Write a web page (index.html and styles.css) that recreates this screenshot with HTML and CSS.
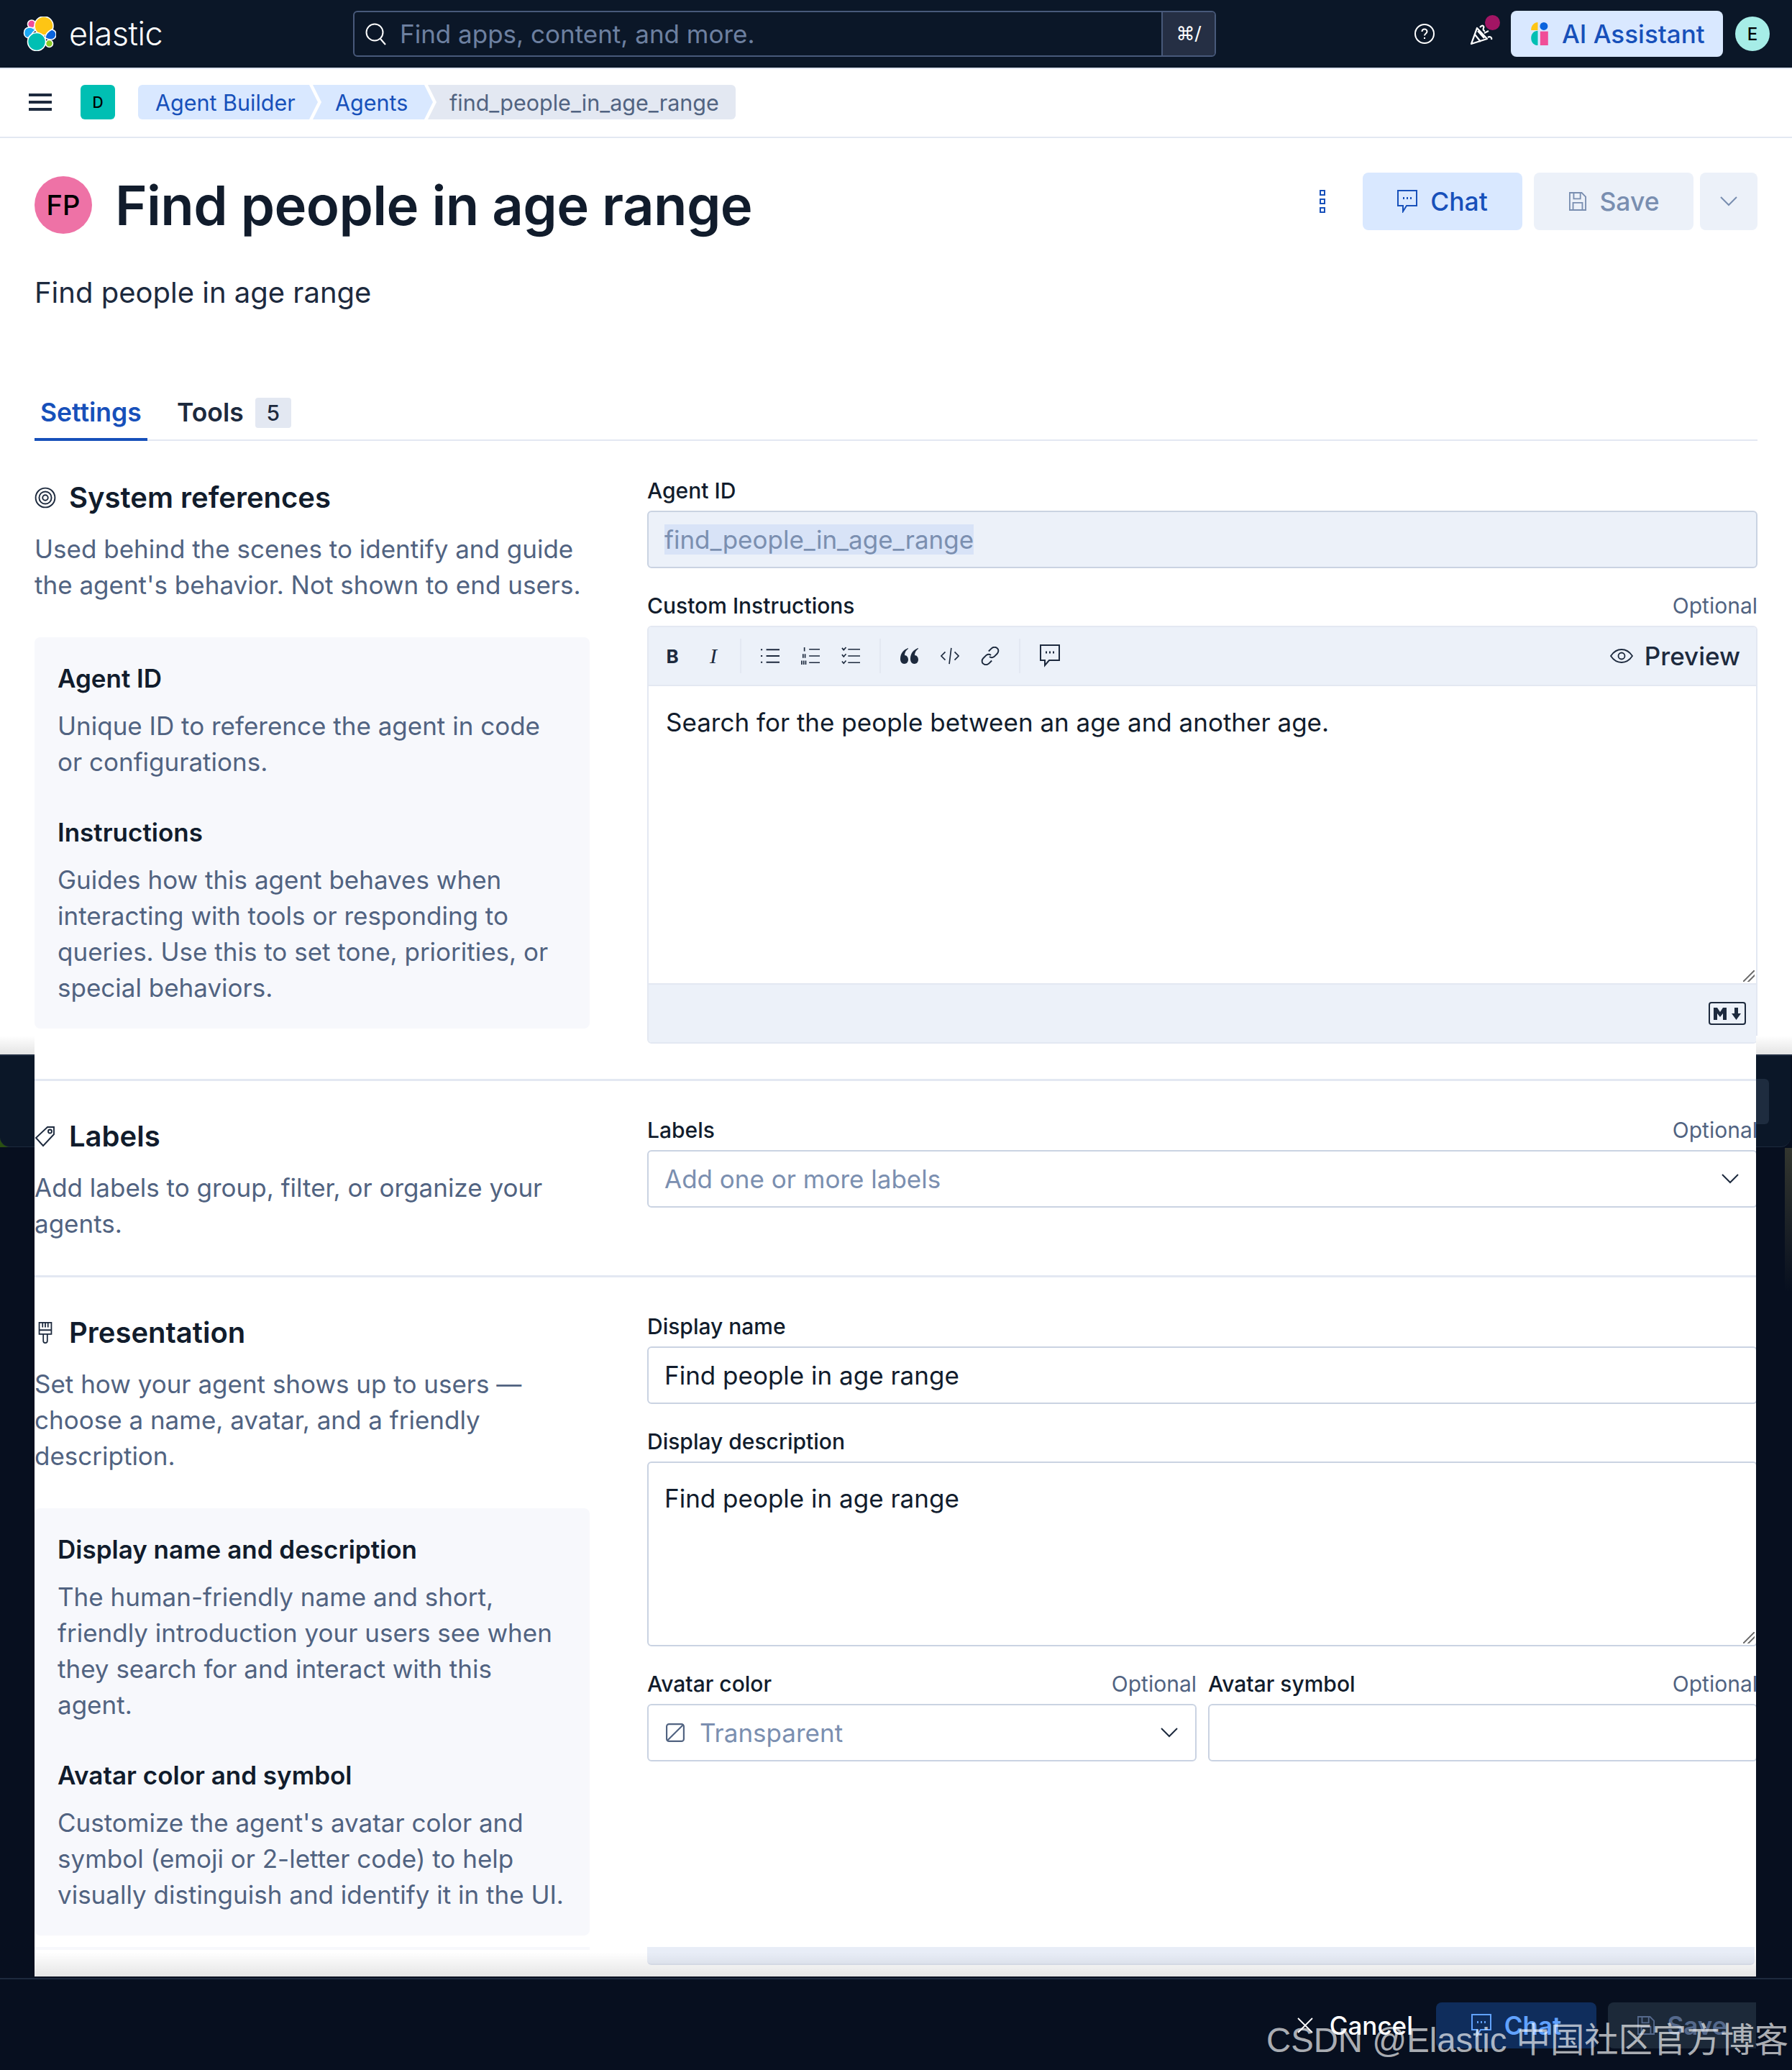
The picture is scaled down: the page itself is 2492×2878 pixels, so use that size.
FILE: index.html
```html
<!DOCTYPE html>
<html lang="en">
<head>
<meta charset="utf-8">
<title>Find people in age range</title>
<link rel="stylesheet" href="styles.css">
</head>
<body>
<div class="page">
  <header class="topbar">
    <div class="brand">
      <svg class="logo" viewBox="12 13 46 48">
        <g stroke="#fff" stroke-width="1.6">
          <circle cx="24" cy="23.5" r="5.5" fill="#f04e98"/>
          <path d="M13.5 36c0-5 3-8 8-8 3 0 6 2 8 4-3 1.500-6 5-8 11-5 0-8-3-8-7z" fill="#1ba9f5"/>
          <circle cx="41" cy="26" r="13" fill="#fec514"/>
          <path d="M43 43c0-4 3-9 9-12 4 1 6 4 6 7 0 4-3 7-7 7-3 0-6-1-8-2z" fill="#0b64dd"/>
          <circle cx="48.500" cy="50.500" r="5" fill="#8ac926"/>
          <circle cx="31" cy="48" r="12.500" fill="#00bfb3"/>
        </g>
      </svg>
      <span class="brand-name">elastic</span>
    </div>
    <div class="search">
      <svg class="icon-search" viewBox="0 0 32 32" fill="none" stroke="#fff" stroke-width="2"><circle cx="14" cy="14" r="11.500"/><path d="M22 23l7 8"/></svg>
      <span class="search-text">Find apps, content, and more.</span>
      <span class="search-key">⌘/</span>
    </div>
    <div class="top-actions">
      <svg class="icon-help" viewBox="0 0 28 28" fill="none" stroke="#fff" stroke-width="2"><circle cx="14" cy="14" r="13"/><path d="M10.500 11c0-2 1.500-3.500 3.500-3.500s3.500 1.500 3.500 3.300c0 3-3.500 3-3.500 5.700M14 19v2"/></svg>
      <span class="party">
        <svg class="icon-party" viewBox="0 0 34 32" fill="none" stroke="#fff" stroke-width="2.200" stroke-linejoin="round"><path d="M2 29L10 7l14 15zM7 16l8 10M11 11l9 10"/><path d="M14 6c4-5 6-1 5 1-1 2 0 4 2 4M20 14l6-3M25 20c3-2 6 0 5 3"/></svg>
        <span class="party-dot"></span>
      </span>
      <button class="ai-btn">
        <svg class="icon-ai" viewBox="0 0 28 38"><path d="M0 13V12C0 5.500 5 0 11 0v13z" fill="#fec514"/><circle cx="21" cy="6.500" r="6.500" fill="#0b64dd"/><path d="M11 38c-6 0-11-4.500-11-12s5-12 11-12z" fill="#00bfb3"/><rect x="15" y="15" width="13" height="23" fill="#f04e98"/></svg>
        AI Assistant
      </button>
      <span class="user-badge">E</span>
    </div>
  </header>

  <nav class="crumbbar">
    <span class="menu-lines"><i></i><i></i><i></i></span>
    <span class="space-tile">D</span>
    <ol class="crumbs">
      <li class="crumb crumb-first">Agent Builder</li>
      <li class="crumb crumb-mid">Agents</li>
      <li class="crumb crumb-last">find_people_in_age_range</li>
    </ol>
  </nav>

  <main class="upper">
    <div class="title-row">
      <span class="avatar">FP</span>
      <h1 class="title">Find people in age range</h1>
      <div class="title-actions">
        <span class="dots"><i></i><i></i><i></i></span>
        <button class="btn btn-primary">
          <svg class="btn-icon" viewBox="0 0 28 32" fill="none" stroke="currentColor" stroke-width="2"><path d="M1 1h26v21H13l-5 8v-8H1z"/><path d="M8 11.500h2M13 11.500h2M18 11.500h2" stroke-width="3"/></svg>
          Chat
        </button>
        <button class="btn btn-muted btn-save">
          <svg class="btn-icon btn-icon-save" viewBox="0 0 26 28" fill="none" stroke="currentColor" stroke-width="2"><path d="M1 1h18l6 6v20H1zM7 1v9h10V1M6 27V16h14v11"/></svg>
          Save
        </button>
        <button class="btn btn-muted btn-square">
          <svg class="chev" viewBox="0 0 24 14" fill="none" stroke="currentColor" stroke-width="2"><path d="M1 1l11 11L23 1"/></svg>
        </button>
      </div>
    </div>
    <p class="lead">Find people in age range</p>

    <div class="tabs">
      <span class="tab tab-active">Settings</span>
      <span class="tab">Tools <span class="tab-count">5</span></span>
    </div>

    <section class="split">
      <div class="side">
        <h2 class="side-title">
          <svg class="side-icon" viewBox="0 0 28 28" fill="none" stroke="#1d2a3e" stroke-width="1.800"><circle cx="14" cy="14" r="12.500"/><circle cx="14" cy="14" r="8"/><circle cx="14" cy="14" r="3.500"/></svg>
          System references
        </h2>
        <p class="side-text">Used behind the scenes to identify and guide the agent's behavior. Not shown to end users.</p>
        <div class="note">
          <h3 class="note-title">Agent ID</h3>
          <p class="note-text">Unique ID to reference the agent in code or configurations.</p>
          <h3 class="note-title note-gap">Instructions</h3>
          <p class="note-text">Guides how this agent behaves when interacting with tools or responding to queries. Use this to set tone, priorities, or special behaviors.</p>
        </div>
      </div>
      <div class="form">
        <div class="field">
          <div class="label-row"><label class="label">Agent ID</label></div>
          <div class="input input-disabled"><span class="selected">find_people_in_age_range</span></div>
        </div>
        <div class="field">
          <div class="label-row"><label class="label">Custom Instructions</label><span class="optional">Optional</span></div>
          <div class="editor">
            <div class="toolbar">
              <span class="tool tool-b">B</span>
              <span class="tool tool-i">I</span>
              <span class="tool-sep"></span>
              <svg class="tool-svg" viewBox="0 0 24 22" fill="none" stroke="#1d2a3e" stroke-width="1.800"><path d="M7 3h17M7 11h17M7 19h17M0 3h2M0 11h2M0 19h2" /></svg>
              <svg class="tool-svg" viewBox="0 0 28 28" fill="none" stroke="#1d2a3e" stroke-width="1.800"><path d="M12 4h16M12 14h16M12 24h16M5 1v6M3 11v6M6 11v6M1 21v6M4 21v6M7 21v6"/></svg>
              <svg class="tool-svg" viewBox="0 0 28 28" fill="none" stroke="#1d2a3e" stroke-width="1.800"><path d="M10 4h18M10 14h18M10 24h18M1 2l2.500 3L7 1M1 12l2.500 3L7 11M1 22l2.500 3L7 21"/></svg>
              <span class="tool-sep"></span>
              <svg class="tool-svg" viewBox="0 0 26 24"><path d="M11 1C5 3 0 8 0 16c0 4 2 7 5.500 7S11 20 11 17s-2-6-5-6c0-4 2-7 5-9zM25 1c-6 2-11 7-11 15 0 4 2 7 5.500 7s5.500-3 5.500-6-2-6-5-6c0-4 2-7 5-9z" fill="#1d2a3e"/></svg>
              <svg class="tool-svg" viewBox="0 0 28 26" fill="none" stroke="#1d2a3e" stroke-width="1.800"><path d="M7 7l-6 6 6 6M21 7l6 6-6 6M16 1l-3 24"/></svg>
              <svg class="tool-svg" viewBox="0 0 24 24" fill="none" stroke="#1d2a3e" stroke-width="1.800"><path d="M10 6l4-4c2-1.500 5-1.500 7 0s2 5 0 7l-4 4c-2 1.500-4 1.500-6 0M14 18l-4 4c-2 1.500-5 1.500-7 0s-2-5 0-7l4-4c2-1.500 4-1.500 6 0"/></svg>
              <span class="tool-sep"></span>
              <svg class="tool-svg tool-comment" viewBox="0 0 28 32" fill="none" stroke="#1d2a3e" stroke-width="2"><path d="M1 1h26v21H13l-6 7v-7H1z"/><path d="M8 11h2M13 11h2M18 11h2" stroke-width="3"/></svg>
              <span class="preview">
                <svg class="preview-eye" viewBox="0 0 32 20" fill="none" stroke="#1d2a3e" stroke-width="1.800"><path d="M1 10c4-6 9-9 15-9s11 3 15 9c-4 6-9 9-15 9S5 16 1 10z"/><circle cx="16" cy="10" r="4.500"/></svg>
                Preview
              </span>
            </div>
            <div class="editor-body">Search for the people between an age and another age.<span class="grip"></span></div>
            <div class="editor-foot">
              <svg class="md-icon" viewBox="0 0 52 32"><rect x="1" y="1" width="50" height="30" rx="3" fill="none" stroke="#1d2a3e" stroke-width="2"/><path d="M7 25V8h5l4 6 4-6h5v17h-5v-9l-4 5-4-5v9zM36 8h5v8h4l-6.500 9-6.500-9h4z" fill="#1d2a3e"/></svg>
            </div>
          </div>
        </div>
      </div>
    </section>
    <span class="fade fade-left"></span>
    <span class="fade fade-right"></span>
  </main>

  <div class="stage">
    <span class="ghost ghost-left"></span>
    <span class="ghost ghost-right"><span class="ghost-btn"></span></span>
    <span class="edge-strip"></span>
    <div class="sheet">
      <div class="sheet-inner">
        <hr class="rule">
        <section class="split split-labels">
          <div class="side">
            <h2 class="side-title">
              <svg class="side-icon" viewBox="0 0 28 30" fill="none" stroke="#1d2a3e" stroke-width="1.900"><path d="M17 2h9v10L11 28 1 17z"/><circle cx="20.500" cy="8" r="2.500"/></svg>
              Labels
            </h2>
            <p class="side-text">Add labels to group, filter, or organize your agents.</p>
          </div>
          <div class="form">
            <div class="field">
              <div class="label-row"><label class="label">Labels</label><span class="optional">Optional</span></div>
              <div class="input input-select"><span class="placeholder">Add one or more labels</span>
                <svg class="chev chev-dark" viewBox="0 0 24 14" fill="none" stroke="currentColor" stroke-width="2"><path d="M1 1l11 11L23 1"/></svg>
              </div>
            </div>
          </div>
        </section>
        <hr class="rule">
        <section class="split split-presentation">
          <div class="side">
            <h2 class="side-title">
              <svg class="side-icon" viewBox="0 0 24 32" fill="none" stroke="#1d2a3e" stroke-width="1.900"><path d="M3 1h18v17H3zM3 12h18M8 1v7M12 1v7M16 1v7M9 18v10c0 4 6 4 6 0V18"/></svg>
              Presentation
            </h2>
            <p class="side-text">Set how your agent shows up to users — choose a name, avatar, and a friendly description.</p>
            <div class="note">
              <h3 class="note-title">Display name and description</h3>
              <p class="note-text">The human-friendly name and short, friendly introduction your users see when they search for and interact with this agent.</p>
              <h3 class="note-title note-gap">Avatar color and symbol</h3>
              <p class="note-text">Customize the agent's avatar color and symbol (emoji or 2-letter code) to help visually distinguish and identify it in the UI.</p>
            </div>
            <div class="note-next"></div>
          </div>
          <div class="form">
            <div class="field">
              <div class="label-row"><label class="label">Display name</label></div>
              <div class="input">Find people in age range</div>
            </div>
            <div class="field">
              <div class="label-row"><label class="label">Display description</label></div>
              <div class="input input-area">Find people in age range<span class="grip grip-area"></span></div>
            </div>
            <div class="pair">
              <div class="field">
                <div class="label-row"><label class="label">Avatar color</label><span class="optional">Optional</span></div>
                <div class="input input-select">
                  <svg class="swatch" viewBox="0 0 24 24" fill="none" stroke="#516381" stroke-width="2"><rect x="1" y="1" width="22" height="22" rx="3"/><path d="M2 22L22 2"/></svg>
                  <span class="placeholder">Transparent</span>
                  <svg class="chev chev-dark" viewBox="0 0 24 14" fill="none" stroke="currentColor" stroke-width="2"><path d="M1 1l11 11L23 1"/></svg>
                </div>
              </div>
              <div class="field">
                <div class="label-row"><label class="label">Avatar symbol</label><span class="optional">Optional</span></div>
                <div class="input"></div>
              </div>
            </div>
            <div class="form-tail"></div>
          </div>
        </section>
        <span class="sheet-shade"></span>
      </div>
    </div>
    <footer class="dock">
      <span class="dock-cancel">
        <svg class="dock-x" viewBox="0 0 24 24" fill="none" stroke="#fff" stroke-width="1.800"><path d="M2 2l20 20M22 2L2 22"/></svg>
        Cancel
      </span>
      <span class="dock-btn dock-chat">
        <svg class="btn-icon" viewBox="0 0 28 32" fill="none" stroke="currentColor" stroke-width="2"><path d="M1 1h26v21H13l-5 8v-8H1z"/><path d="M8 11.500h2M13 11.500h2M18 11.500h2" stroke-width="3"/></svg>
        Chat
      </span>
      <span class="dock-btn dock-save">
        <svg class="btn-icon btn-icon-save" viewBox="0 0 26 28" fill="none" stroke="currentColor" stroke-width="2"><path d="M1 1h18l6 6v20H1zM7 1v9h10V1M6 27V16h14v11"/></svg>
        Save
      </span>
    </footer>
    <span class="watermark">CSDN @Elastic 中国社区官方博客</span>
  </div>
</div>
</body>
</html>
```
FILE: styles.css
```css
* { box-sizing: border-box; }
html, body { margin: 0; padding: 0; }
body {
  font-family: Inter, "Noto Sans", sans-serif;
  color: #111c2c;
  background: #fff;
}
h1, h2, h3, p, ol { margin: 0; padding: 0; }
button { font-family: inherit; border: 0; }
.page { width: 2492px; height: 2878px; overflow: hidden; display: flex; flex-direction: column; }

/* top bar */
.topbar {
  height: 96px;
  flex: none;
  background: #0b1728;
  border-bottom: 2px solid #e3e8f2;
  display: flex;
  align-items: center;
  padding: 0 31px 0 32px;
}
.brand { display: flex; align-items: center; gap: 18px; width: 459px; flex: none; }
.logo { width: 46px; height: 48px; flex: none; }
.brand-name { color: #fff; font-size: 45px; font-weight: 300; letter-spacing: -0.5px; line-height: 48px; }
.search {
  width: 1200px;
  height: 64px;
  flex: none;
  border: 2px solid #48597a;
  border-radius: 6px;
  display: flex;
  align-items: center;
  padding-left: 14px;
}
.icon-search { width: 32px; height: 34px; flex: none; }
.search-text { color: #6d80a0; font-size: 35px; margin-left: 17px; flex: 1; }
.search-key {
  width: 74px;
  height: 60px;
  background: #252f44;
  border-left: 2px solid #48597a;
  color: #fff;
  font-size: 26px;
  display: flex;
  align-items: center;
  justify-content: center;
  border-radius: 0 4px 4px 0;
  font-family: "DejaVu Sans", sans-serif;
}
.top-actions { margin-left: auto; display: flex; align-items: center; }
.icon-help { width: 28px; height: 28px; }
.party { position: relative; display: block; width: 34px; height: 32px; margin-left: 49px; margin-top: 2px; }
.icon-party { width: 34px; height: 32px; display: block; }
.party-dot { position: absolute; left: 21px; top: -11px; width: 21px; height: 21px; border-radius: 50%; background: #a21564; }
.ai-btn {
  margin-left: 23px;
  width: 295px;
  height: 64px;
  background: #d9e8ff;
  border-radius: 8px;
  color: #1750ba;
  font-size: 35px;
  font-weight: 500;
  display: flex;
  align-items: center;
  gap: 17px;
  padding: 0 0 0 26px;
}
.icon-ai { width: 28px; height: 32px; flex: none; }
.user-badge {
  margin-left: 17px;
  width: 48px;
  height: 48px;
  border-radius: 50%;
  background: #a6ede7;
  color: #000;
  font-size: 24px;
  font-weight: 500;
  display: flex;
  align-items: center;
  justify-content: center;
}

/* breadcrumb bar */
.crumbbar {
  height: 96px;
  flex: none;
  display: flex;
  align-items: center;
  padding: 0 0 2px 40px;
  border-bottom: 2px solid #e3e8f2;
  box-shadow: 0 4px 10px rgba(80, 100, 140, 0.08);
  position: relative;
}
.menu-lines { display: flex; flex-direction: column; gap: 6px; width: 32px; flex: none; }
.menu-lines i { display: block; height: 4px; background: #1d2a3e; }
.space-tile {
  margin-left: 40px;
  width: 48px;
  height: 48px;
  border-radius: 6px;
  background: #00bfb3;
  color: #000;
  font-size: 21px;
  font-weight: 500;
  display: flex;
  align-items: center;
  justify-content: center;
  flex: none;
}
.crumbs { list-style: none; display: flex; margin-left: 32px; height: 48px; }
.crumb { height: 48px; line-height: 50px; font-size: 30.500px; color: #1750ba; background: #d9e8ff; white-space: nowrap; }
.crumb-first { width: 250px; padding-left: 24px; border-radius: 6px 0 0 6px; clip-path: polygon(0 0, 238px 0, 250px 24px, 238px 48px, 0 48px); }
.crumb-mid { width: 167px; margin-left: -7px; padding-left: 31px; clip-path: polygon(0 0, 155px 0, 167px 24px, 155px 48px, 0 48px, 12px 24px); }
.crumb-last { width: 428px; margin-left: -7px; padding-left: 30px; color: #516381; background: #e3e8f2; border-radius: 0 6px 6px 0; clip-path: polygon(0 0, 100% 0, 100% 100%, 0 100%, 12px 24px); }

/* upper */
.upper { position: relative; height: 1274px; flex: none; padding: 0 48px; background: #fff; }
.title-row { display: flex; align-items: center; height: 80px; margin-top: 53px; }
.avatar {
  width: 80px;
  height: 80px;
  border-radius: 50%;
  background: #ee72a6;
  color: #000;
  font-size: 38px;
  font-weight: 500;
  display: flex;
  align-items: center;
  justify-content: center;
  flex: none;
}
.title { margin-left: 32px; font-size: 76px; font-weight: 600; line-height: 92px; letter-spacing: -0.6px; color: #111c2c; }
.title-actions { margin-left: auto; display: flex; align-items: center; margin-top: -10px; }
.dots { display: flex; flex-direction: column; gap: 4px; margin-right: 52px; }
.dots i { width: 8px; height: 8px; border: 2px solid #1750ba; display: block; }
.btn {
  height: 80px;
  width: 222px;
  border-radius: 8px;
  font-size: 35.500px;
  font-weight: 500;
  display: flex;
  align-items: center;
  justify-content: center;
  gap: 18px;
}
.btn-primary { background: #d9e8ff; color: #1750ba; }
.btn-muted { background: #ecf1f9; color: #798eb0; margin-left: 16px; }
.btn-save { padding-left: 8px; }
.btn-square { width: 80px; margin-left: 9px; }
.btn-icon { width: 28px; height: 32px; flex: none; }
.btn-icon-save { width: 24px; height: 26px; }
.chev { width: 24px; height: 14px; display: block; }
.lead { font-size: 40px; line-height: 50px; margin-top: 57px; color: #1d2a3e; }

/* tabs */
.tabs { display: flex; height: 103px; margin-top: 78px; margin-bottom: -1px; border-bottom: 2px solid #e3e8f2; gap: 33px; align-items: flex-end; }
.tab { height: 58px; padding: 0 8px; font-size: 35.500px; font-weight: 600; color: #1d2a3e; display: flex; gap: 16px; line-height: 42px; white-space: nowrap; }
.tab-active { color: #1750ba; border-bottom: 4px solid #1750ba; margin-bottom: -2px; height: 60px; width: 157px; }
.tab-count { width: 50px; height: 42px; background: #e3e8f2; border-radius: 4px; font-size: 30px; font-weight: 500; text-align: center; }

/* split sections */
.split { display: grid; grid-template-columns: 772px 1544px; column-gap: 80px; }
.side { padding-top: 55px; }
.form { padding-top: 49px; display: flex; flex-direction: column; gap: 31px; }
.side-title { display: flex; align-items: center; gap: 18px; font-size: 40px; line-height: 50px; font-weight: 600; color: #111c2c; }
.side-icon { width: 30px; height: 30px; flex: none; }
.side-text { font-size: 35px; line-height: 50px; margin-top: 21px; color: #516381; }
.note { margin-top: 48px; padding: 32px; background: #f7f8fc; border-radius: 8px; }
.note-title { font-size: 35px; line-height: 50px; font-weight: 600; color: #111c2c; }
.note-gap { margin-top: 48px; }
.note-text { font-size: 35px; line-height: 50px; margin-top: 16px; color: #516381; }

/* form */
.label-row { display: flex; justify-content: space-between; height: 40px; line-height: 42px; margin-bottom: 9px; }
.label { font-size: 30px; font-weight: 500; color: #111c2c; white-space: nowrap; }
.optional { font-size: 30px; color: #516381; white-space: nowrap; }
.input {
  height: 80px;
  border: 2px solid #cad3e2;
  border-radius: 6px;
  background: #fff;
  padding: 0 22px;
  display: flex;
  align-items: center;
  font-size: 35px;
  color: #111c2c;
  position: relative;
}
.input-disabled { background: #ecf1f9; color: #7b8fb0; }
.selected { background: #d8e3f7; line-height: 42px; }
.input-select { gap: 21px; }
.input-select .chev { margin-left: auto; }
.chev-dark { color: #1d2a3e; margin-right: 2px; }
.placeholder { color: #7b8fb0; white-space: nowrap; }
.swatch { width: 26px; height: 26px; flex: none; margin-left: 2px; }
.input-area { height: 257px; align-items: flex-start; padding-top: 24px; line-height: 50px; }
.pair { display: grid; grid-template-columns: 764px 764px; column-gap: 16px; }
.form-tail { height: 25px; margin-top: 227px; margin-right: 4px; background: #e8edf7; border-bottom: 2px solid #dfe4f0; border-radius: 0 0 6px 6px; }
.note-next { margin-top: 16px; height: 4px; background: #f7f8fc; }

/* editor */
.editor { height: 581px; display: flex; flex-direction: column; border: 2px solid #e3e8f2; border-radius: 6px; overflow: hidden; }
.toolbar { height: 82px; flex: none; background: #ecf1f9; border-bottom: 2px solid #e3e8f2; display: flex; align-items: center; padding-left: 23px; color: #1d2a3e; }
.tool { width: 20px; font-size: 26px; text-align: center; color: #1d2a3e; flex: none; }
.tool-b { font-weight: 700; }
.tool-i { font-family: "Liberation Serif", serif; font-style: italic; font-size: 30px; margin-left: 37px; }
.tool-sep { width: 2px; height: 48px; background: #e3e8f2; margin: 0 27px; flex: none; }
.tool-svg { width: 26px; height: 26px; margin-right: 30px; flex: none; }
.tool-svg:nth-of-type(3), .tool-svg:nth-of-type(6) { margin-right: 0; }
.tool-comment { width: 28px; height: 32px; }
.preview { margin-left: auto; display: flex; align-items: center; gap: 16px; font-size: 35px; font-weight: 500; padding-right: 22px; }
.preview-eye { width: 32px; height: 20px; }
.editor-body { flex: 1; padding: 25px 25px 0 24px; font-size: 35px; line-height: 50px; color: #111c2c; position: relative; background: #fff; }
.grip { position: absolute; right: 2px; bottom: 2px; width: 16px; height: 16px; background: linear-gradient(135deg, transparent 0 46%, #777 46% 54%, transparent 54% 68%, #777 68% 76%, transparent 76%); }
.editor-foot { height: 82px; flex: none; background: #ecf1f9; border-top: 2px solid #e3e8f2; display: flex; align-items: center; justify-content: flex-end; padding-right: 14px; }
.md-icon { width: 52px; height: 32px; }

/* dark stage */
.fade { position: absolute; bottom: 0; width: 48px; height: 26px; background: linear-gradient(#fff, #e4e4e4); }
.fade-left { left: 0; }
.fade-right { right: 0; width: 50px; }
.stage { position: relative; flex: 1; background: #070f1f; border-top: 2px solid #1d2a3e; display: flex; flex-direction: column; }
.stage::before { content: ""; position: absolute; left: 0; top: 113px; width: 14px; height: 14px; background: #2a5010; }
.ghost { position: absolute; top: 0; height: 127px; background: #0b1728; border-bottom: 1px solid #1d2a3e; }
.ghost-left { left: 0; width: 48px; border-radius: 0 0 0 14px; }
.ghost-right { right: 2px; width: 48px; border-radius: 0 0 14px 0; }
.ghost-btn { position: absolute; left: 0; top: 32px; width: 18px; height: 63px; background: #1e2c3f; border-radius: 0 6px 6px 0; }
.edge-strip { position: absolute; right: 0; top: 128px; width: 10px; height: 200px; background: linear-gradient(#33362f, #070f1f); }
.sheet { margin: -6px 0 0 48px; width: 2394px; height: 1286px; overflow: hidden; background: #fff; position: relative; flex: none; }
.sheet-inner { width: 2396px; }
.rule { height: 3px; border: 0; margin: 38px 0 0; background: #e3e8f2; }
.split-labels .side { padding-top: 52px; }
.split-labels .form { padding-top: 47px; }
.split-labels { height: 270px; }
.split-presentation .side { padding-top: 52px; }
.split-presentation .form { padding-top: 47px; }
.split-labels + .rule { margin-top: 0; }
.sheet-shade { position: absolute; left: 0; right: 0; bottom: 0; height: 34px; background: linear-gradient(rgba(0,0,0,0), rgba(0,0,0,.1)); }
.dock { flex: 1; display: flex; align-items: flex-start; padding: 32px 50px 0 0; justify-content: flex-end; margin-top: 2px; border-top: 2px solid #1d2a3e; }
.dock-cancel { display: flex; align-items: center; gap: 22px; height: 64px; color: #fff; font-size: 35px; font-weight: 500; margin-right: 32px; }
.dock-x { width: 24px; height: 24px; }
.dock-btn { height: 64px; width: 223px; border-radius: 8px; font-size: 35px; font-weight: 600; display: flex; align-items: center; justify-content: center; gap: 18px; }
.dock-chat { background: #0f2d5c; color: #61a2ff; }
.dock-save { background: #1c2939; color: #55698c; margin-left: 16px; width: 206px; border-radius: 8px 0 0 8px; }
.watermark {
  position: absolute;
  right: 5px;
  top: 1341px;
  font-family: "Liberation Sans", "Noto Sans CJK SC", sans-serif;
  font-size: 47.300px;
  line-height: 56px;
  color: rgba(255, 255, 255, 0.68);
  white-space: nowrap;
}
```
